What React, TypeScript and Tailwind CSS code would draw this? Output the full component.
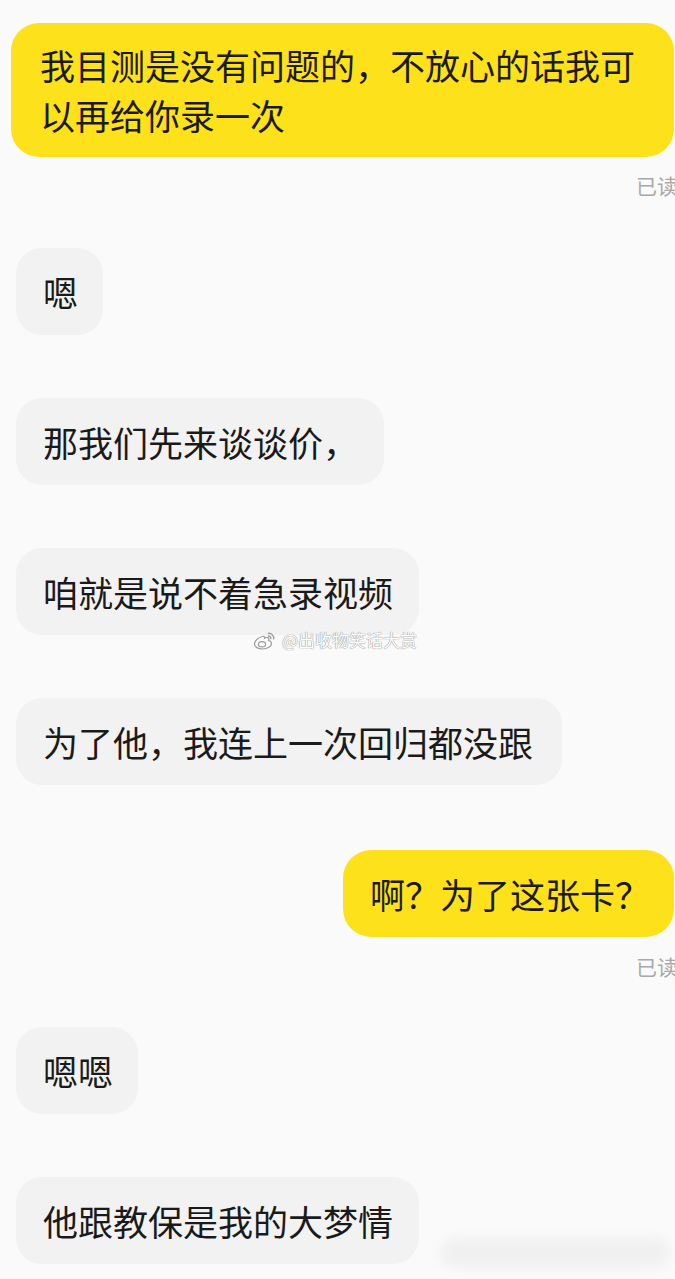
const font = {
  fontFamily: '"Noto Sans CJK SC", "Noto Sans", sans-serif',
};

const Mine = ({ text, className = "", pad = "pl-[29px] pr-[30px] py-[17px] leading-[50px]" }: { text: string; className?: string; pad?: string }) => (
  <div className={`flex justify-end pr-px ${className}`}>
    <div className={`rounded-[28px] bg-[#fde21b] text-[35px] text-[#1c1a10] ${pad}`}>
      {text}
    </div>
  </div>
);

const Theirs = ({ text, className = "", pr = "pr-[28px]" }: { text: string; className?: string; pr?: string }) => (
  <div className={`flex pl-4 ${className}`}>
    <div className={`rounded-[26px] bg-[#f2f2f2] pl-[27px] py-[18px] text-[35px] leading-[51px] text-[#1a1a1a] ${pr}`}>
      {text}
    </div>
  </div>
);

const Read = ({ className = "" }: { className?: string }) => (
  <div className={`pl-[636px] text-[21px] leading-[22px] whitespace-nowrap text-[#a8a8a8] ${className}`}>
    已读
  </div>
);

const WeiboLogo = () => (
  <svg width="23" height="19" viewBox="0 0 23 19" fill="none">
    <path
      d="M9.5 5.5C5 6.5 1.5 10 1.5 13c0 3 3.6 5 8 5 5 0 9-2.6 9-5.6 0-1.8-1.6-2.6-2.9-2.9.6-1.5.3-2.6-1-2.9-1.4-.3-3 .6-3 .6.4-1.4-.4-2.1-2.1-1.7Z"
      fill="#fff"
      stroke="#9a9a9a"
      strokeWidth="1.2"
    />
    <ellipse cx="9" cy="13.3" rx="3.6" ry="2.6" fill="none" stroke="#9a9a9a" strokeWidth="1.2" />
    <path d="M15.5 2.3a5 5 0 0 1 5.2 5.6" stroke="#9a9a9a" strokeWidth="1.4" strokeLinecap="round" />
    <path d="M15.3 5a2.4 2.4 0 0 1 2.6 2.7" stroke="#9a9a9a" strokeWidth="1.3" strokeLinecap="round" />
  </svg>
);

export default function App() {
  return (
    <div
      className="relative w-[675px] h-[1279px] overflow-hidden bg-[#fafafa] pt-[23px]"
      style={font}
    >
      <div className="pl-[11px]">
        <Mine text="我目测是没有问题的，不放心的话我可以再给你录一次" />
      </div>
      <Read className="mt-[17px]" />

      <Theirs text="嗯" className="mt-[52px]" pr="pr-[25px]" />
      <Theirs text="那我们先来谈谈价，" className="mt-[63px]" pr="pr-[26px]" />
      <Theirs text="咱就是说不着急录视频" className="mt-[63px]" pr="pr-[26px]" />
      <Theirs text="为了他，我连上一次回归都没跟" className="mt-[63px]" pr="pr-[29px]" />

      <Mine
        text="啊？为了这张卡？"
        className="mt-[65px]"
        pad="pl-[27px] pr-[24px] py-[18px] leading-[51px]"
      />
      <Read className="mt-[18px]" />

      <Theirs text="嗯嗯" className="mt-[50px]" pr="pr-[25px]" />
      <Theirs text="他跟教保是我的大梦情" className="mt-[63px]" pr="pr-[26px]" />

      {/* watermark */}
      <div className="absolute left-[253px] top-[629px] flex items-center gap-[6px]">
        <WeiboLogo />
        <span
          className="text-[17px] leading-[22px] text-white"
          style={{ textShadow: "0 0 1px #8a8a8a, 0 0 1px #8a8a8a" }}
        >
          @出收物笑话大赏
        </span>
      </div>

      {/* smudge bottom right */}
      <div className="absolute left-[440px] top-[1238px] h-[30px] w-[230px] rounded-full bg-[#ececec] blur-[6px] opacity-70" />
    </div>
  );
}
